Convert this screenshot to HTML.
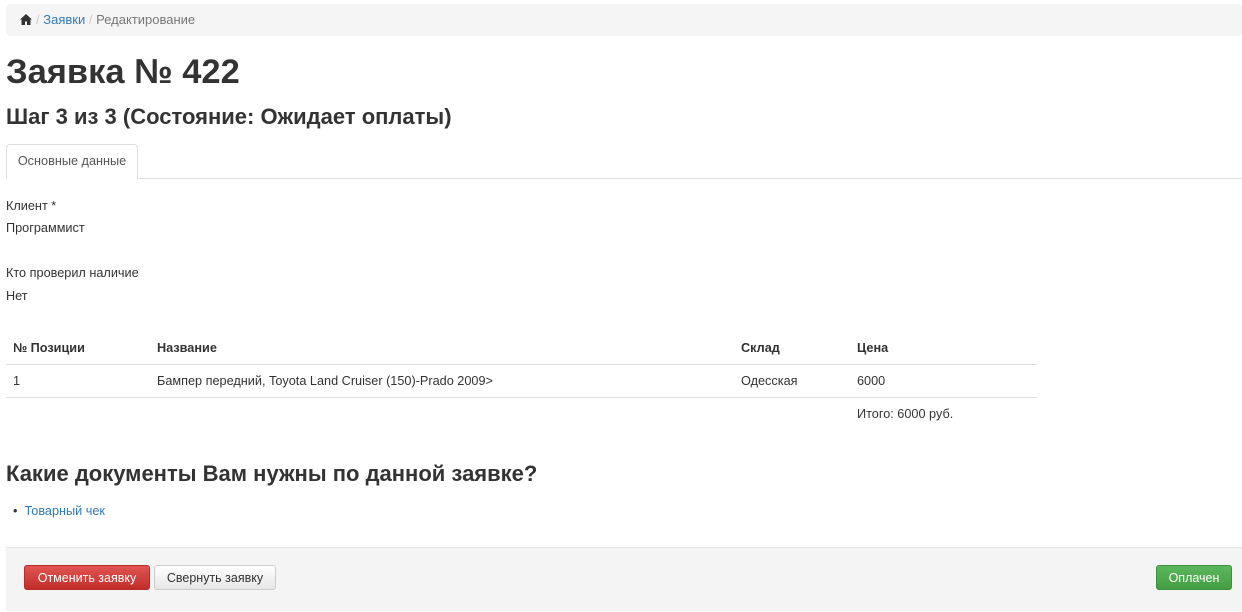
<!DOCTYPE html>
<html><head><meta charset="utf-8"><style>
body{margin:0;width:1242px;height:612px;overflow:hidden;font-family:"Liberation Sans",sans-serif;font-size:12.7px;color:#333;background:#fff;position:relative}
.a{position:absolute;white-space:nowrap}
a{color:#337ab7;text-decoration:none}
.btn{position:absolute;height:25px;border-radius:3px;font-size:12.5px;line-height:25px;text-align:center;box-sizing:border-box}
</style></head><body>
<div class="a" style="left:6px;top:4px;width:1236px;height:32px;background:#f5f5f5;border-radius:4px"></div>
<svg class="a" style="left:20px;top:14px" width="12" height="11" viewBox="0 0 12 11"><path d="M6 0L0 5.5h1.5V11h3.5V7.5h2V11h3.5V5.5H12z" fill="#333"/></svg>
<div class="a" style="left:36px;top:12px;color:#ccc;font-size:13px">/ <a href="#">Заявки</a> <span style="color:#ccc">/</span> <span style="color:#777">Редактирование</span></div>
<div class="a" style="left:6px;top:53px;font-size:34.5px;font-weight:bold">Заявка № 422</div>
<div class="a" style="left:6px;top:104px;font-size:22px;font-weight:bold">Шаг 3 из 3 (Состояние: Ожидает оплаты)</div>
<div class="a" style="left:6px;top:178px;width:1236px;border-top:1px solid #ddd"></div>
<div class="a" style="left:6px;top:144px;width:132px;height:35px;border:1px solid #ddd;border-bottom:1px solid #fff;border-radius:4px 4px 0 0;background:#fff;box-sizing:border-box;line-height:33px;text-align:center;color:#555">Основные данные</div>
<div class="a" style="left:6px;top:199px">Клиент *</div>
<div class="a" style="left:6px;top:221px">Программист</div>
<div class="a" style="left:6px;top:266px">Кто проверил наличие</div>
<div class="a" style="left:6px;top:289px">Нет</div>
<div class="a" style="left:13px;top:341px;font-weight:bold">№ Позиции</div>
<div class="a" style="left:157px;top:341px;font-weight:bold">Название</div>
<div class="a" style="left:741px;top:341px;font-weight:bold">Склад</div>
<div class="a" style="left:857px;top:341px;font-weight:bold">Цена</div>
<div class="a" style="left:6px;top:364px;width:1031px;border-top:1px solid #ddd"></div>
<div class="a" style="left:13px;top:374px">1</div>
<div class="a" style="left:157px;top:374px">Бампер передний, Toyota Land Cruiser (150)-Prado 2009&gt;</div>
<div class="a" style="left:741px;top:374px">Одесская</div>
<div class="a" style="left:857px;top:374px">6000</div>
<div class="a" style="left:6px;top:397px;width:1031px;border-top:1px solid #ddd"></div>
<div class="a" style="left:857px;top:407px">Итого: 6000 руб.</div>
<div class="a" style="left:6px;top:461px;font-size:22px;font-weight:bold">Какие документы Вам нужны по данной заявке?</div>
<div class="a" style="left:13px;top:504px">•&nbsp;&nbsp;<a href="#">Товарный чек</a></div>
<div class="a" style="left:6px;top:547px;width:1236px;height:63px;background:#f4f4f4;border-top:1px solid #e3e3e3"></div>
<div class="btn" style="left:24px;top:565px;width:126px;background:linear-gradient(#e05552,#c12e2a);color:#fff;border:1px solid #b92c28">Отменить заявку</div>
<div class="btn" style="left:154px;top:565px;width:122px;background:linear-gradient(#fff,#e6e6e6);color:#333;border:1px solid #ccc">Свернуть заявку</div>
<div class="btn" style="left:1156px;top:565px;width:76px;background:linear-gradient(#5cb85c,#449d44);color:#fff;border:1px solid #3e8f3e">Оплачен</div>
</body></html>
